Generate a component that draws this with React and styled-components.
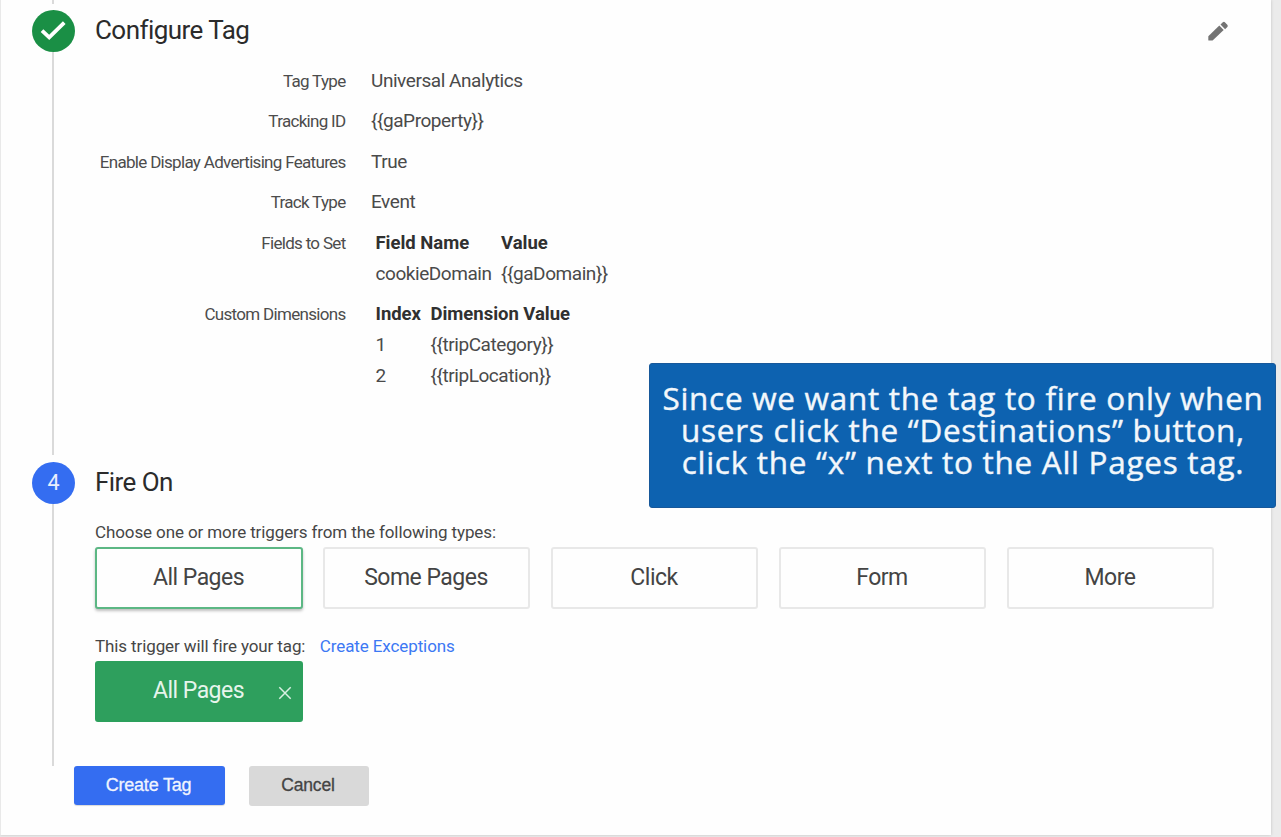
import React from 'react';
import styled, { createGlobalStyle, css } from 'styled-components';

const GlobalStyle = createGlobalStyle`
  * { box-sizing: border-box; }
  body {
    margin: 0;
    background: #ececec;
    font-family: Roboto, sans-serif;
    color: #4a4a4a;
    overflow: hidden;
  }
`;

const Page = styled.div`
  position: relative;
  width: 1281px;
  height: 837px;
  overflow: hidden;
  background: #ebebeb;
`;

const Card = styled.main`
  display: flex;
  flex-direction: column;
  width: 1271px;
  height: 835px;
  background: #fefefe;
  border-left: 1px solid #e9e9e9;
  box-shadow: 0 0 3px rgba(0, 0, 0, 0.18);
`;

const Step = styled.section`
  display: flex;
  height: ${(p) => p.$height}px;
`;

const Rail = styled.div`
  display: flex;
  flex-direction: column;
  align-items: center;
  width: 43px;
  margin-left: 31px;
  flex: none;
`;

const Line = styled.div`
  width: 2px;
  height: ${(p) => p.$height || 'auto'};
  flex: ${(p) => (p.$height ? 'none' : '1')};
  margin-bottom: ${(p) => p.$gap || 0}px;
  margin-right: 1px;
  background: #dadada;
`;

const Badge = styled.div`
  display: flex;
  align-items: center;
  justify-content: center;
  width: 43px;
  height: 42px;
  flex: none;
  border-radius: 50%;
  background: ${(p) => p.$color};
  color: #e9effd;
  font-size: 21.5px;
  line-height: 42px;
`;

const Body = styled.div`
  display: flex;
  flex-direction: column;
  flex: 1;
  padding: ${(p) => p.$top}px 40px 0 20px;
`;

const Header = styled.header`
  display: flex;
  justify-content: space-between;
  height: 34px;
`;

const Title = styled.h2`
  margin: 0;
  font-size: 26px;
  font-weight: 400;
  line-height: 34px;
  letter-spacing: -0.55px;
  color: #2b2b2b;
`;

const EditButton = styled.button`
  display: flex;
  padding: 0;
  margin-top: 5px;
  width: 26px;
  height: 26px;
  border: 0;
  background: none;
`;

const Details = styled.dl`
  display: grid;
  grid-template-columns: 250.5px auto;
  grid-template-rows: 40.5px 40.5px 40.5px 40.5px 71.5px 100px;
  column-gap: 25.5px;
  margin: 18.6px 0 0;
`;

const Label = styled.dt`
  text-align: right;
  font-size: 17px;
  line-height: 30px;
  letter-spacing: -0.69px;
  color: #4c4c4c;
`;

const Value = styled.dd`
  margin: 0;
  font-size: 19px;
  line-height: 30px;
  letter-spacing: -0.44px;
`;

const FieldTable = styled.div`
  display: grid;
  grid-template-columns: ${(p) => p.$first}px auto;
  grid-auto-rows: 31px;
  padding-left: 4.5px;
`;

const HeadCell = styled.span`
  font-size: 18.5px;
  font-weight: 700;
  letter-spacing: -0.03px;
  color: #303030;
`;

const Cell = styled.span``;

const Prompt = styled.p`
  display: flex;
  gap: 14.5px;
  margin: ${(p) => p.$top}px 0 0;
  font-size: 17px;
  line-height: 28px;
  letter-spacing: -0.11px;
  color: #464646;
`;

const Link = styled.a`
  color: #3c78f4;
`;

const TriggerRow = styled.div`
  display: flex;
  gap: 21px;
  margin-top: 1px;
`;

const tones = {
  plain: css`
    width: 207px;
    border: 2px solid #e8e8e8;
  `,
  selected: css`
    width: 208px;
    margin-right: -1px;
    border: 2px solid #5cb784;
    box-shadow: 0 2px 3px rgba(0, 0, 0, 0.25);
  `,
  applied: css`
    width: 208px;
    height: 61px;
    border: 2px solid #2ca05c;
    background: #2e9f5d;
    color: #e6f5ec;
  `,
};

const Trigger = styled.button`
  position: relative;
  height: 62px;
  padding: 0 1px 1px 0;
  border-radius: 3px;
  background: #fefefe;
  color: #444;
  font: 400 23px/40px Roboto, sans-serif;
  letter-spacing: -0.52px;
  ${(p) => tones[p.$tone || 'plain']}
`;

const Remove = styled.span`
  position: absolute;
  right: 9.5px;
  top: 23px;
  display: flex;
`;

const Actions = styled.footer`
  display: flex;
  align-items: flex-start;
  gap: 24px;
  padding-left: 73px;
`;

const Action = styled.button`
  width: ${(p) => (p.$primary ? 151 : 120)}px;
  height: ${(p) => (p.$primary ? 39 : 40)}px;
  padding: 0 2px ${(p) => (p.$primary ? 0 : 1)}px 0;
  border: 0;
  border-radius: 3px;
  background: ${(p) => (p.$primary ? '#346df1' : '#d9d9d9')};
  box-shadow: ${(p) => (p.$primary ? '0 1px 1px rgba(0, 0, 0, 0.15)' : 'none')};
  color: ${(p) => (p.$primary ? '#f0f4fe' : '#444')};
  font: 400 ${(p) => (p.$primary ? 18 : 17.5)}px 'Liberation Sans', Arial, sans-serif;
  letter-spacing: -0.2px;
  -webkit-text-stroke: 0.3px;
`;

const Callout = styled.aside`
  position: absolute;
  left: 649px;
  top: 363px;
  width: 627px;
  height: 145px;
  padding: 18px 0 0 1px;
  border: 1px solid #17589a;
  border-radius: 3px;
  background: #0d62b0;
  color: #f2f7fb;
  font: 400 31.5px/32px 'Open Sans', sans-serif;
  letter-spacing: 0.71px;
  -webkit-text-stroke: 0.4px;
  text-align: center;
  white-space: nowrap;
`;

const CheckIcon = () => (
  <svg width="43" height="42" viewBox="0 0 43 42" fill="none">
    <path d="M11.4 21.9 17.2 27.3 30.9 14" stroke="#fff" strokeWidth="3.8" strokeLinecap="square" />
  </svg>
);

const PencilIcon = () => (
  <svg width="26" height="26" viewBox="0 0 26 26" fill="#737373">
    <path d="M3.3 18.2 14.3 7.5 18.7 12 7.6 22.6H3.9Q3.3 22.6 3.3 22z" />
    <path d="M15.5 6.5 17.8 4.3Q19 3.3 20.1 4.4L22.3 6.7Q23.4 7.9 22.3 9L20.1 11.2z" />
  </svg>
);

const CloseIcon = () => (
  <svg width="14" height="14" viewBox="0 0 14 14" fill="none">
    <path d="M1.3 1.3 12.7 12.7M12.7 1.3 1.3 12.7" stroke="#d9f0e2" strokeWidth="1.5" />
  </svg>
);

const summary = [
  ['Tag Type', 'Universal Analytics'],
  ['Tracking ID', '{{gaProperty}}'],
  ['Enable Display Advertising Features', 'True'],
  ['Track Type', 'Event'],
];

export default function App() {
  return (
    <Page>
      <GlobalStyle />
      <Card>
        <Step $height={455}>
          <Rail>
            <Line $height="4px" $gap={6} />
            <Badge $color="#1a8f45"><CheckIcon /></Badge>
            <Line />
          </Rail>
          <Body $top={13}>
            <Header>
              <Title>Configure Tag</Title>
              <EditButton aria-label="Edit"><PencilIcon /></EditButton>
            </Header>
            <Details>
              {summary.map(([label, value]) => (
                <React.Fragment key={label}>
                  <Label>{label}</Label>
                  <Value>{value}</Value>
                </React.Fragment>
              ))}
              <Label>Fields to Set</Label>
              <Value>
                <FieldTable $first={125.5}>
                  <HeadCell>Field Name</HeadCell>
                  <HeadCell>Value</HeadCell>
                  <Cell>cookieDomain</Cell>
                  <Cell>{'{{gaDomain}}'}</Cell>
                </FieldTable>
              </Value>
              <Label>Custom Dimensions</Label>
              <Value>
                <FieldTable $first={55}>
                  <HeadCell>Index</HeadCell>
                  <HeadCell>Dimension Value</HeadCell>
                  <Cell>1</Cell>
                  <Cell>{'{{tripCategory}}'}</Cell>
                  <Cell>2</Cell>
                  <Cell>{'{{tripLocation}}'}</Cell>
                </FieldTable>
              </Value>
            </Details>
          </Body>
        </Step>
        <Step $height={311}>
          <Rail>
            <Line $height="0px" $gap={6.5} />
            <Badge $color="#346df1">4</Badge>
            <Line />
          </Rail>
          <Body $top={10}>
            <Header>
              <Title>Fire On</Title>
            </Header>
            <Prompt $top={19}>Choose one or more triggers from the following types:</Prompt>
            <TriggerRow>
              <Trigger $tone="selected">All Pages</Trigger>
              <Trigger>Some Pages</Trigger>
              <Trigger>Click</Trigger>
              <Trigger>Form</Trigger>
              <Trigger>More</Trigger>
            </TriggerRow>
            <Prompt $top={23}>
              This trigger will fire your tag:
              <Link>Create Exceptions</Link>
            </Prompt>
            <TriggerRow>
              <Trigger $tone="applied">
                All Pages
                <Remove><CloseIcon /></Remove>
              </Trigger>
            </TriggerRow>
          </Body>
        </Step>
        <Actions>
          <Action $primary>Create Tag</Action>
          <Action>Cancel</Action>
        </Actions>
      </Card>
      <Callout>
        Since we want the tag to fire only when
        <br />
        users click the “Destinations” button,
        <br />
        click the “x” next to the All Pages tag.
      </Callout>
    </Page>
  );
}
